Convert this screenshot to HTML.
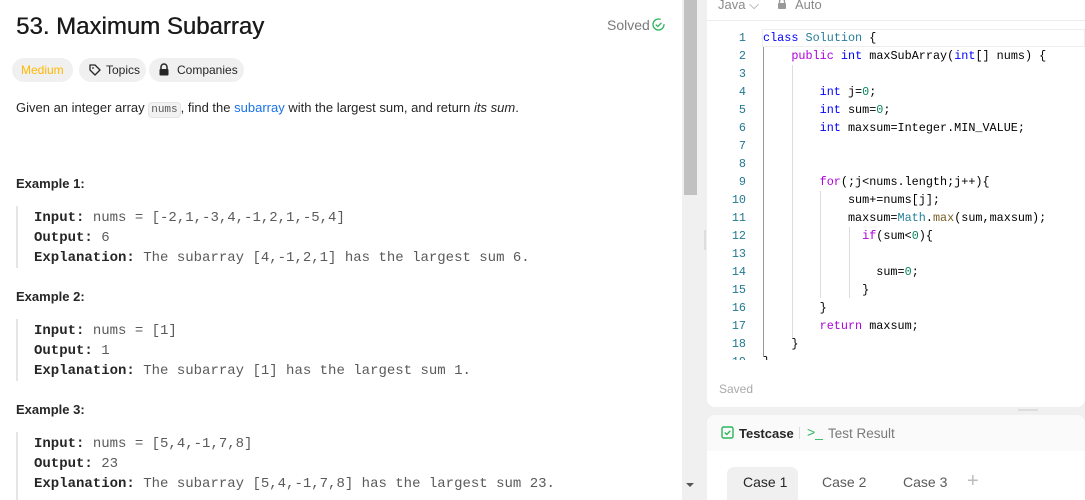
<!DOCTYPE html>
<html><head><style>
*{margin:0;padding:0;box-sizing:border-box}
html{overflow:hidden;width:1085px;height:500px}
body{width:1085px;height:500px;overflow:hidden;background:#f0f0f0;font-family:"Liberation Sans",sans-serif;position:relative;color:#262626}
.left{position:absolute;left:0;top:0;width:682px;height:500px;background:#fff}
.sb{position:absolute;left:682px;top:0;width:16px;height:500px;background:#f0f0f0}
.thumb{position:absolute;left:684px;top:0;width:13px;height:195px;background:#c1c1c1}
.abs{position:absolute;white-space:pre}
h1{position:absolute;left:16px;top:13px;font-size:24px;font-weight:normal;color:#1a1a1a;text-shadow:0.4px 0 0 #1a1a1a}
.tag{position:absolute;top:58px;height:24px;border-radius:12px;background:#f0f0f0;font-size:12px;line-height:24px;padding:0 9px}
.mono{font-family:"Liberation Mono",monospace}
.ex{position:absolute;left:16px;border-left:2px solid #e5e5e5;padding-left:16px;padding-top:2px;font-family:"Liberation Mono",monospace;font-size:14px;line-height:20px;color:#5a5a5a;white-space:nowrap}
.ex b{color:#262626}
.exh{position:absolute;left:16px;font-size:13px;font-weight:bold;color:#262626}
.right{position:absolute;left:707px;top:0;width:378px;height:407px;background:#fff;border-radius:0 0 8px 8px}
.code{position:absolute;font-family:"Liberation Mono",monospace;font-size:11.8px;line-height:18px;white-space:pre;color:#000}
.ln{position:absolute;left:712px;width:34px;text-align:right;font-family:"Liberation Mono",monospace;font-size:11.8px;line-height:18px;color:#237893;height:331px;overflow:hidden}
.k{color:#0000ff}.p{color:#af00db}.t{color:#267f99}.n{color:#098658}.f{color:#795e26}
.tc{position:absolute;left:707px;top:415px;width:378px;height:85px;background:#fff;border-radius:8px 8px 0 0}
</style></head><body>
<div class="left"></div>
<div class="sb"></div><div class="thumb"></div>
<div class="abs" style="left:686px;top:483px;width:0;height:0;border-left:4px solid transparent;border-right:4px solid transparent;border-top:4px solid #555"></div>
<div class="abs" style="left:704px;top:230px;width:2px;height:20px;background:#ddd"></div>
<h1>53. Maximum Subarray</h1>
<div class="abs" style="left:607px;top:17px;font-size:14px;color:#7a7a7a">Solved</div>
<svg class="abs" style="left:652px;top:18px" width="13" height="13" viewBox="0 0 13 13"><circle cx="6.5" cy="6.5" r="5.5" fill="none" stroke="#2db55d" stroke-width="1.3" stroke-dasharray="28 6"/><path d="M3.8 6.6l2 2 3.6-3.8" fill="none" stroke="#2db55d" stroke-width="1.3"/></svg>
<div class="tag" style="left:12px;width:61px;color:#ffb800">Medium</div>
<div class="tag" style="left:79px;width:67px;padding-left:27px">Topics</div>
<svg class="abs" style="left:88px;top:63px" width="14" height="14" viewBox="0 0 14 14"><path d="M2 2h5l5 5-5 5-5-5z" fill="none" stroke="#262626" stroke-width="1.3" stroke-linejoin="round"/><circle cx="5" cy="5" r="0.9" fill="#262626"/></svg>
<div class="tag" style="left:149px;width:95px;padding-left:28px">Companies</div>
<svg class="abs" style="left:158px;top:63px" width="12" height="13" viewBox="0 0 12 13"><path d="M3 6V4a3 3 0 016 0v2" fill="none" stroke="#262626" stroke-width="1.5"/><rect x="1.5" y="6" width="9" height="6.5" rx="1" fill="#262626"/></svg>
<div class="abs" style="left:16px;top:100px;font-size:13px;line-height:16px">Given an integer array <span class="mono" style="background:#f2f2f2;border:1px solid #e5e5e5;border-radius:4px;padding:1px 2px;font-size:11px;color:#5a5a5a">nums</span>, find the <span style="color:#1a73e8">subarray</span> with the largest sum, and return <i>its sum</i>.</div>
<div class="exh" style="top:176px">Example 1:</div>
<div class="ex" style="top:206px"><b>Input:</b> nums = [-2,1,-3,4,-1,2,1,-5,4]<br><b>Output:</b> 6<br><b>Explanation:</b> The subarray [4,-1,2,1] has the largest sum 6.</div>
<div class="exh" style="top:289px">Example 2:</div>
<div class="ex" style="top:319px"><b>Input:</b> nums = [1]<br><b>Output:</b> 1<br><b>Explanation:</b> The subarray [1] has the largest sum 1.</div>
<div class="exh" style="top:402px">Example 3:</div>
<div class="ex" style="top:432px;height:68px;overflow:hidden"><b>Input:</b> nums = [5,4,-1,7,8]<br><b>Output:</b> 23<br><b>Explanation:</b> The subarray [5,4,-1,7,8] has the largest sum 23.</div>

<div class="right"></div>
<div class="abs" style="left:718px;top:-3px;font-size:13px;color:#8a8a8a">Java ⌵</div>
<svg class="abs" style="left:777px;top:-2px" width="10" height="11" viewBox="0 0 10 11"><path d="M2.5 5V3.5a2.5 2.5 0 015 0V5" fill="none" stroke="#999" stroke-width="1.3"/><rect x="1" y="5" width="8" height="6" rx="1" fill="#999"/></svg>
<div class="abs" style="left:795px;top:-3px;font-size:13px;color:#8a8a8a">Auto</div>
<div class="abs" style="left:707px;top:20px;width:378px;height:1px;background:#eee"></div>
<div class="abs" style="left:762px;top:29px;width:323px;height:18px;border:1px solid #eee"></div>
<div class="abs" style="left:763px;top:47px;width:1px;height:310px;background:#999"></div>
<div class="abs" style="left:792px;top:65px;width:1px;height:273px;background:#ddd"></div>
<div class="abs" style="left:820px;top:191px;width:1px;height:107px;background:#ddd"></div>
<div class="abs" style="left:849px;top:227px;width:1px;height:71px;background:#ddd"></div>
<div class="ln" style="top:29px">1<br>2<br>3<br>4<br>5<br>6<br>7<br>8<br>9<br>10<br>11<br>12<br>13<br>14<br>15<br>16<br>17<br>18<br>19</div>
<div class="code" style="left:763px;top:29px;height:331px;overflow:hidden"><span class="k">class</span> <span class="t">Solution</span> {
    <span class="p">public</span> <span class="k">int</span> maxSubArray(<span class="k">int</span>[] nums) {

        <span class="k">int</span> j=<span class="n">0</span>;
        <span class="k">int</span> sum=<span class="n">0</span>;
        <span class="k">int</span> maxsum=Integer.MIN_VALUE;


        <span class="p">for</span>(;j&lt;nums.length;j++){
            sum+=nums[j];
            maxsum=<span class="t">Math</span>.<span class="f">max</span>(sum,maxsum);
              <span class="p">if</span>(sum&lt;<span class="n">0</span>){

                sum=<span class="n">0</span>;
              }
        }
        <span class="p">return</span> maxsum;
    }
}</div>
<div class="abs" style="left:719px;top:382px;font-size:12px;color:#aaa">Saved</div>
<div class="abs" style="left:1018px;top:409px;width:20px;height:2px;background:#ddd"></div>
<div class="tc"></div>
<div class="abs" style="left:707px;top:415px;width:378px;height:36px;background:#fafafa;border-radius:8px 8px 0 0"></div>
<svg class="abs" style="left:721px;top:426px" width="13" height="13" viewBox="0 0 13 13"><rect x="1" y="1" width="11" height="11" rx="1.5" fill="none" stroke="#2db55d" stroke-width="1.4"/><path d="M3.8 6.5l2 2 3.4-3.6" fill="none" stroke="#2db55d" stroke-width="1.4"/></svg>
<div class="abs" style="left:739px;top:426px;font-size:13px;font-weight:bold;color:#262626">Testcase</div>
<div class="abs" style="left:799px;top:427px;width:1px;height:12px;background:#ddd"></div>
<div class="abs" style="left:807px;top:424px;font-size:14px;color:#2db55d">&gt;_</div>
<div class="abs" style="left:828px;top:426px;font-size:13.5px;color:#7a7a7a">Test Result</div>
<div class="abs" style="left:727px;top:467px;width:71px;height:40px;background:#f0f0f0;border-radius:7px"></div>
<div class="abs" style="left:743px;top:474px;font-size:14px;color:#262626">Case 1</div>
<div class="abs" style="left:822px;top:474px;font-size:14px;color:#5a5a5a">Case 2</div>
<div class="abs" style="left:903px;top:474px;font-size:14px;color:#5a5a5a">Case 3</div>
<div class="abs" style="left:967px;top:470px;font-size:20px;color:#bbb">+</div>
</body></html>
